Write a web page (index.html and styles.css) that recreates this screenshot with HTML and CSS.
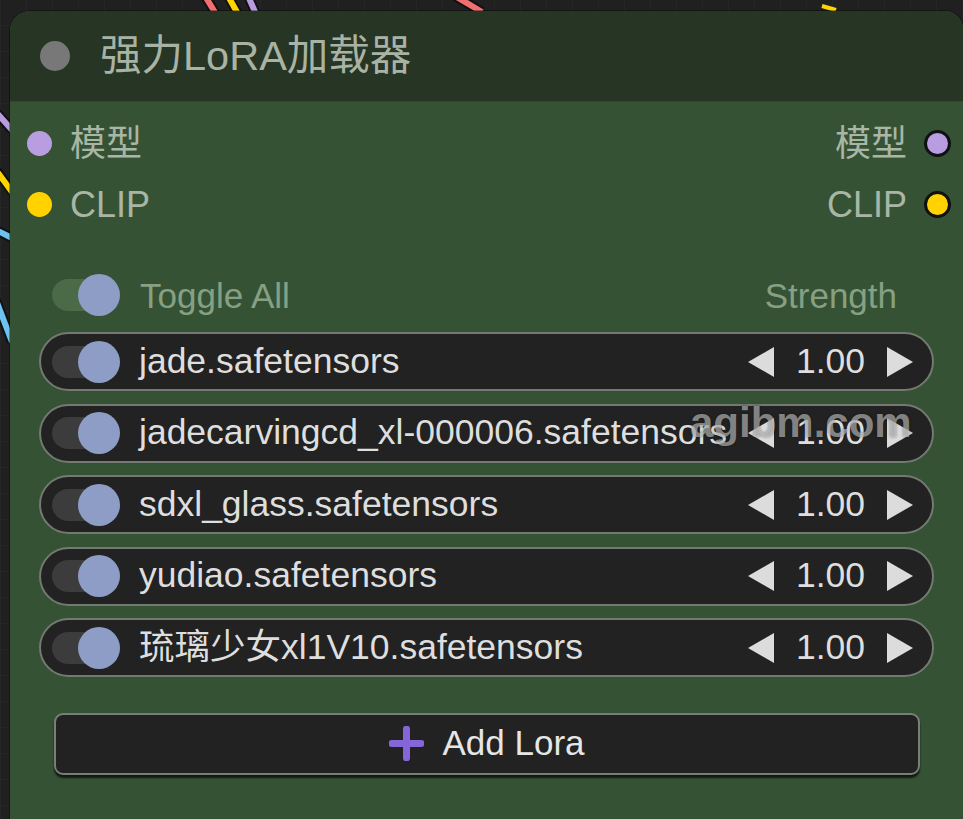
FILE: index.html
```html
<!DOCTYPE html>
<html lang="zh">
<head>
<meta charset="utf-8">
<title>强力LoRA加载器</title>
<link rel="stylesheet" href="styles.css">
</head>
<body>
<svg class="wires" width="963" height="819" viewBox="0 0 963 819" aria-hidden="true">
  <g stroke-width="6" stroke-linecap="butt" fill="none">
    <line x1="205" y1="-4" x2="216" y2="14" stroke="#111" stroke-width="10"/>
    <line x1="205" y1="-4" x2="216" y2="14" stroke="#f07070"/>
    <line x1="228" y1="-4" x2="238" y2="14" stroke="#111" stroke-width="10"/>
    <line x1="228" y1="-4" x2="238" y2="14" stroke="#ffd400"/>
    <line x1="248" y1="-4" x2="256" y2="14" stroke="#111" stroke-width="10"/>
    <line x1="248" y1="-4" x2="256" y2="14" stroke="#b79ce0"/>
    <line x1="455" y1="-4" x2="482" y2="12" stroke="#111" stroke-width="10"/>
    <line x1="455" y1="-4" x2="482" y2="12" stroke="#f07070"/>
    <line x1="822" y1="6" x2="836" y2="10" stroke="#ffd400" stroke-width="4"/>
    <line x1="-4" y1="112" x2="12" y2="130" stroke="#111" stroke-width="10"/>
    <line x1="-4" y1="112" x2="12" y2="130" stroke="#b79ce0"/>
    <line x1="-4" y1="170" x2="12" y2="192" stroke="#111" stroke-width="10"/>
    <line x1="-4" y1="170" x2="12" y2="192" stroke="#ffd400"/>
    <line x1="-4" y1="230" x2="12" y2="238" stroke="#111" stroke-width="10"/>
    <line x1="-4" y1="230" x2="12" y2="238" stroke="#6ec2f0"/>
    <line x1="-4" y1="300" x2="12" y2="342" stroke="#111" stroke-width="10"/>
    <line x1="-4" y1="300" x2="12" y2="342" stroke="#6ec2f0"/>
  </g>
</svg>

<div class="node">
  <div class="title-bar">
    <span class="title-dot"></span>
    <span class="title-text">强力LoRA加载器</span>
  </div>
  <div class="node-body">
    <div class="slots">
      <div class="slot-row">
        <div class="slot in"><span class="slot-dot purple"></span><span class="slot-label">模型</span></div>
        <div class="slot out"><span class="slot-label">模型</span><span class="slot-dot purple ring"></span></div>
      </div>
      <div class="slot-row">
        <div class="slot in"><span class="slot-dot yellow"></span><span class="slot-label">CLIP</span></div>
        <div class="slot out"><span class="slot-label">CLIP</span><span class="slot-dot yellow ring"></span></div>
      </div>
    </div>

    <div class="loras">
      <div class="header-row">
        <div class="toggle toggle-all"><span class="knob"></span></div>
        <span class="header-label grow">Toggle All</span>
        <span class="header-label">Strength</span>
      </div>

      <div class="lora-list">
        <div class="lora-row">
          <div class="toggle"><span class="knob"></span></div>
          <span class="lora-name">jade.safetensors</span>
          <div class="strength">
            <svg class="arrow" width="26" height="30" viewBox="0 0 26 30"><polygon points="26,0 26,30 0,15"/></svg>
            <span class="value">1.00</span>
            <svg class="arrow" width="26" height="30" viewBox="0 0 26 30"><polygon points="0,0 0,30 26,15"/></svg>
          </div>
        </div>
        <div class="lora-row">
          <div class="toggle"><span class="knob"></span></div>
          <span class="lora-name">jadecarvingcd_xl-000006.safetensors</span>
          <div class="strength">
            <svg class="arrow" width="26" height="30" viewBox="0 0 26 30"><polygon points="26,0 26,30 0,15"/></svg>
            <span class="value">1.00</span>
            <svg class="arrow" width="26" height="30" viewBox="0 0 26 30"><polygon points="0,0 0,30 26,15"/></svg>
          </div>
        </div>
        <div class="lora-row">
          <div class="toggle"><span class="knob"></span></div>
          <span class="lora-name">sdxl_glass.safetensors</span>
          <div class="strength">
            <svg class="arrow" width="26" height="30" viewBox="0 0 26 30"><polygon points="26,0 26,30 0,15"/></svg>
            <span class="value">1.00</span>
            <svg class="arrow" width="26" height="30" viewBox="0 0 26 30"><polygon points="0,0 0,30 26,15"/></svg>
          </div>
        </div>
        <div class="lora-row">
          <div class="toggle"><span class="knob"></span></div>
          <span class="lora-name">yudiao.safetensors</span>
          <div class="strength">
            <svg class="arrow" width="26" height="30" viewBox="0 0 26 30"><polygon points="26,0 26,30 0,15"/></svg>
            <span class="value">1.00</span>
            <svg class="arrow" width="26" height="30" viewBox="0 0 26 30"><polygon points="0,0 0,30 26,15"/></svg>
          </div>
        </div>
        <div class="lora-row">
          <div class="toggle"><span class="knob"></span></div>
          <span class="lora-name">琉璃少女xl1V10.safetensors</span>
          <div class="strength">
            <svg class="arrow" width="26" height="30" viewBox="0 0 26 30"><polygon points="26,0 26,30 0,15"/></svg>
            <span class="value">1.00</span>
            <svg class="arrow" width="26" height="30" viewBox="0 0 26 30"><polygon points="0,0 0,30 26,15"/></svg>
          </div>
        </div>
      </div>

      <button class="add-btn" type="button">
        <svg class="plus" width="35" height="35" viewBox="0 0 35 35"><path d="M17.5 3 V32 M3 17.5 H32" stroke="#8466d8" stroke-width="7" stroke-linecap="round"/></svg>
        <span>Add Lora</span>
      </button>
    </div>
  </div>
</div>

<div class="watermark">agibm.com</div>
</body>
</html>
```

FILE: styles.css
```css
html, body {
  margin: 0;
  padding: 0;
}
body {
  width: 963px;
  height: 819px;
  overflow: hidden;
  position: relative;
  background-color: #202020;
  background-image:
    linear-gradient(90deg, rgba(255,255,255,0.025) 1px, transparent 1px),
    linear-gradient(0deg, rgba(255,255,255,0.025) 1px, transparent 1px);
  background-size: 26px 26px;
  font-family: "Liberation Sans", Arial, "Noto Sans CJK SC", sans-serif;
}
.wires {
  position: absolute;
  left: 0;
  top: 0;
}
.node {
  position: relative;
  margin: 11px 0 0 10px;
  width: 953px;
  height: 820px;
  border-radius: 20px 18px 0 0;
  overflow: hidden;
  background: #355334;
  box-shadow: 0 0 0 1px rgba(0,0,0,0.35);
}
.title-bar {
  height: 90px;
  background: #263524;
  display: flex;
  align-items: center;
  padding-left: 30px;
  gap: 30px;
  border-bottom: 1px solid #2f4a2e;
}
.title-dot {
  width: 30px;
  height: 30px;
  border-radius: 50%;
  background: #787878;
}
.title-text {
  font-size: 41.5px;
  color: #a8b3a5;
  font-family: "Liberation Sans", Arial, "Noto Sans CJK SC", sans-serif;
  line-height: 1;
  position: relative;
  top: 0;
}
.node-body {
  padding-top: 11px;
}
.slot-row {
  height: 61px;
  display: flex;
  justify-content: space-between;
  align-items: center;
  padding: 0 12px 0 17px;
}
.slot {
  display: flex;
  align-items: center;
  gap: 18px;
}
.slot.out {
  gap: 17px;
}
.slot-label {
  font-size: 36px;
  color: #a9b6a6;
  line-height: 1;
}
.slot-dot {
  width: 25px;
  height: 25px;
  border-radius: 50%;
  box-sizing: border-box;
}
.slot-dot.ring {
  width: 27px;
  height: 27px;
  border: 3px solid #111;
}
.purple { background: #b89de0; }
.yellow { background: #ffd200; }

.loras {
  padding: 0 29px;
}
.header-row {
  margin-top: 35px;
  height: 50px;
  display: flex;
  align-items: center;
  padding: 0 37px 0 13px;
}
.header-label {
  font-size: 35px;
  color: #87a084;
  line-height: 1;
}
.grow {
  flex: 1;
  margin-left: 20px;
}
.toggle {
  position: relative;
  width: 68px;
  height: 42px;
  display: flex;
  justify-content: flex-end;
  align-items: center;
  flex: none;
}
.toggle::before {
  content: "";
  position: absolute;
  left: 0;
  right: 4px;
  top: 5px;
  height: 32px;
  border-radius: 16px;
  background: #3c3c3c;
}
.toggle-all::before {
  background: #4a6a48;
}
.knob {
  position: relative;
  width: 42px;
  height: 42px;
  border-radius: 50%;
  background: #8d9dc6;
}
.lora-list {
  margin-top: 12px;
  display: flex;
  flex-direction: column;
  gap: 12.5px;
}
.lora-row {
  height: 59px;
  box-sizing: border-box;
  border: 2px solid #747a72;
  border-radius: 30px;
  background: #222222;
  display: flex;
  align-items: center;
  padding: 0 19px 0 11px;
}
.lora-name {
  flex: 1;
  margin-left: 19px;
  font-size: 35.5px;
  color: #dedede;
  line-height: 1;
  white-space: nowrap;
  font-family: "Liberation Sans", Arial, "Noto Sans CJK SC", sans-serif;
}
.strength {
  display: flex;
  align-items: center;
  gap: 22px;
}
.arrow polygon {
  fill: #dcdcdc;
}
.value {
  font-size: 35.5px;
  color: #dedede;
  line-height: 1;
}
.add-btn {
  margin: 36px 14px 0 15px;
  width: calc(100% - 29px);
  height: 62px;
  box-sizing: border-box;
  border: 2px solid #7a7d78;
  border-radius: 9px;
  background: #222222;
  box-shadow: 0 3px 2px rgba(0,0,0,0.7);
  display: flex;
  align-items: center;
  justify-content: center;
  gap: 18px;
  padding: 0 0 4px 0;
  font-family: "Liberation Sans", Arial, sans-serif;
  font-size: 35px;
  color: #e6e6e6;
  cursor: pointer;
}
.add-btn span {
  line-height: 1;
}
.plus {
  position: relative;
  top: 1px;
}
.watermark {
  position: absolute;
  left: 690px;
  top: 402px;
  font-size: 42px;
  line-height: 42px;
  font-weight: bold;
  color: rgba(205,205,205,0.6);
  text-shadow: 0 0 3px rgba(0,0,0,0.4);
  font-family: "Liberation Sans", Arial, sans-serif;
}
```
